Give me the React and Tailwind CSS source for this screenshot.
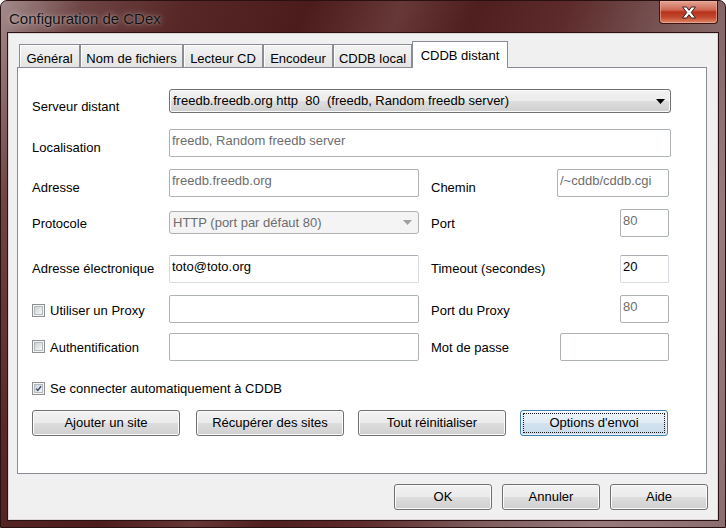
import React from 'react';

const btnBg = 'bg-[linear-gradient(to_bottom,#f2f2f2_0%,#ebebeb_48%,#dddddd_52%,#cfcfcf_100%)]';

const Button = ({ children, className = '', focused = false }) => {
    if (focused) {
        return (
            <div className={`h-[26px] rounded-[3px] border border-[#3c7fb1] p-[2px] shadow-[inset_0_0_0_1px_#ffffffa0] bg-[linear-gradient(to_bottom,#eef5fb_0%,#e2ecf5_48%,#d3e2ee_52%,#c9dbea_100%)] flex ${className}`}>
                <span className="flex-1 border border-dotted border-[#1a1a1a] flex items-center justify-center leading-4">
                    {children}
                </span>
            </div>
        );
    }
    return (
        <div className={`h-[26px] rounded-[3px] border border-[#707070] shadow-[inset_0_0_0_1px_#fbfbfb] ${btnBg} flex items-center justify-center leading-4 ${className}`}>
            {children}
        </div>
    );
};

const Field = ({ value = '', enabled = false, className = '' }) => (
    <div
        className={`h-[28px] shrink-0 rounded-[2px] border bg-white pl-[2px] pt-[3px] leading-4 whitespace-nowrap overflow-hidden ${
            enabled
                ? 'border-[#d5dae1] border-t-[#abadb3] text-black'
                : 'border-[#adb2b5] text-[#6d6d6d]'
        } ${className}`}
    >
        {value}
    </div>
);

const Checkbox = ({ checked = false, className = '' }) => (
    <span className={`w-[13px] h-[13px] shrink-0 border border-[#8e8f8f] bg-[#f4f4f4] p-[1px] flex ${className}`}>
        <span className="flex-1 border border-[#b4b9be] bg-[linear-gradient(135deg,#cdd1d6,#f7f7f7)] flex">
            {checked && (
                <svg viewBox="0 0 9 9" className="w-full h-full">
                    <path d="M1.5 4.6 L3.6 7 L7.8 1.6" fill="none" stroke="#34466e" strokeWidth="1.7" />
                </svg>
            )}
        </span>
    </span>
);

const Tab = ({ label, width, active = false }) =>
    active ? (
        <div className={`${width} h-[27px] -mb-px relative z-10 bg-white border border-[#898c95] border-b-0 pt-[6px] text-center leading-4`}>
            {label}
        </div>
    ) : (
        <div className={`${width} h-[23px] bg-[linear-gradient(to_bottom,#f3f3f3,#e3e3e3)] border border-[#898c95] border-b-0 shadow-[inset_1px_1px_0_#ffffff] pt-[6px] text-center leading-4`}>
            {label}
        </div>
    );

const App = () => {
    return (
        <div className="w-[726px] h-[528px] flex flex-col rounded-t-[7px] border border-[#2a1111] overflow-hidden text-[13px] text-black font-['Liberation_Sans',Arial,sans-serif] bg-[linear-gradient(112deg,#a48c8c_0%,#6e4444_9%,#572626_20%,#4c1b1b_33%,#673838_43%,#4f1e1e_51%,#5d2b2b_61%,#7c5a5a_73%,#977b7b_86%,#8b6d6d_100%)]">
            {/* Title bar */}
            <div className="h-[32px] shrink-0 flex items-start justify-between pl-[8px] pr-[7px]">
                <span className="pt-[9px] text-[15px] leading-[18px] text-[#111] [text-shadow:0_0_6px_rgba(255,255,255,0.55),0_0_2px_rgba(255,255,255,0.35)]">
                    Configuration de CDex
                </span>
                <div className="w-[59px] h-[23px] rounded-b-[4px] border border-t-0 border-[#3a1515] shadow-[inset_0_0_0_1px_#f0b0a0a0] bg-[linear-gradient(to_bottom,#e3a595_0%,#d06a55_40%,#b8321c_50%,#c24a30_75%,#e08a68_100%)] flex items-center justify-center">
                    <svg width="16" height="13" viewBox="0 0 16 13">
                        <path
                            d="M1.5 1 H5.5 L8 4.3 L10.5 1 H14.5 L10.2 6.5 L14.5 12 H10.5 L8 8.7 L5.5 12 H1.5 L5.8 6.5 Z"
                            fill="#ffffff"
                            stroke="#3b2222"
                            strokeWidth="1"
                            strokeLinejoin="round"
                        />
                    </svg>
                </div>
            </div>

            {/* Client area */}
            <div className="ml-[7px] mr-[7px] h-[487px] shrink-0 bg-[#f0f0f0] border border-[#ddd5d5] shadow-[0_0_0_1px_#2b1111] flex flex-col">
                {/* Tabs */}
                <div className="pt-[7px] pl-[10px] h-[33px] flex items-end">
                    <Tab label="Général" width="w-[61px]" />
                    <Tab label="Nom de fichiers" width="w-[103px]" />
                    <Tab label="Lecteur CD" width="w-[80px]" />
                    <Tab label="Encodeur" width="w-[70px]" />
                    <Tab label="CDDB local" width="w-[79px]" />
                    <Tab label="CDDB distant" width="w-[96px]" active />
                </div>

                {/* Panel */}
                <div className="ml-[8px] w-[690px] h-[407px] bg-white border border-[#898c95] pt-[21px] pl-[14px] pr-[37px] flex flex-col">
                    <div className="flex h-[24px]">
                        <span className="w-[137px] shrink-0 mt-[10px] leading-4">Serveur distant</span>
                        <div className={`w-[502px] h-[24px] shrink-0 rounded-[3px] border border-[#707070] shadow-[inset_0_0_0_1px_#fafafa] ${btnBg} flex items-center pl-[3px] pr-[5px]`}>
                            <span className="flex-1 whitespace-pre leading-4">freedb.freedb.org http  80  (freedb, Random freedb server)</span>
                            <svg width="9" height="5" viewBox="0 0 9 5">
                                <path d="M0 0 H9 L4.5 5 Z" fill="#000" />
                            </svg>
                        </div>
                    </div>

                    <div className="flex mt-[16px]">
                        <span className="w-[137px] shrink-0 mt-[11px] leading-4">Localisation</span>
                        <Field className="w-[502px]" value="freedb, Random freedb server" />
                    </div>

                    <div className="flex mt-[12px]">
                        <span className="w-[137px] shrink-0 mt-[11px] leading-4">Adresse</span>
                        <Field className="w-[250px]" value="freedb.freedb.org" />
                        <span className="flex-1 ml-[12px] mt-[11px] leading-4">Chemin</span>
                        <Field className="w-[112px]" value="/~cddb/cddb.cgi" />
                    </div>

                    <div className="flex mt-[12px]">
                        <span className="w-[137px] shrink-0 mt-[7px] leading-4">Protocole</span>
                        <div className="w-[250px] h-[23px] mt-[2px] shrink-0 rounded-[3px] border border-[#adb2b5] bg-[#f4f4f4] flex items-center pl-[3px] pr-[6px] text-[#6d6d6d]">
                            <span className="flex-1 leading-4">HTTP (port par défaut 80)</span>
                            <svg width="9" height="5" viewBox="0 0 9 5">
                                <path d="M0 0 H9 L4.5 5 Z" fill="#a0a0a0" />
                            </svg>
                        </div>
                        <span className="flex-1 ml-[12px] mt-[7px] leading-4">Port</span>
                        <Field className="w-[49px]" value="80" />
                    </div>

                    <div className="flex mt-[18px]">
                        <span className="w-[137px] shrink-0 mt-[6px] leading-4">Adresse électronique</span>
                        <Field className="w-[250px]" value="toto@toto.org" enabled />
                        <span className="flex-1 ml-[12px] mt-[6px] leading-4">Timeout (secondes)</span>
                        <Field className="w-[49px]" value="20" enabled />
                    </div>

                    <div className="flex mt-[12px]">
                        <div className="w-[137px] shrink-0 flex items-start">
                            <Checkbox className="mt-[9px]" />
                            <span className="ml-[5px] mt-[8px] leading-4">Utiliser un Proxy</span>
                        </div>
                        <Field className="w-[250px]" />
                        <span className="flex-1 ml-[12px] mt-[8px] leading-4">Port du Proxy</span>
                        <Field className="w-[49px]" value="80" />
                    </div>

                    <div className="flex mt-[10px]">
                        <div className="w-[137px] shrink-0 flex items-start">
                            <Checkbox className="mt-[7px]" />
                            <span className="ml-[5px] mt-[7px] leading-4">Authentification</span>
                        </div>
                        <Field className="w-[250px]" />
                        <span className="flex-1 ml-[12px] mt-[7px] leading-4">Mot de passe</span>
                        <Field className="w-[109px]" />
                    </div>

                    <div className="flex items-start mt-[20px] h-[16px]">
                        <Checkbox checked className="mt-[1px]" />
                        <span className="ml-[5px] leading-4">Se connecter automatiquement à CDDB</span>
                    </div>

                    <div className="flex mt-[13px]">
                        <Button className="w-[148px]">Ajouter un site</Button>
                        <Button className="w-[148px] ml-[16px]">Récupérer des sites</Button>
                        <Button className="w-[148px] ml-[14px]">Tout réinitialiser</Button>
                        <Button className="w-[148px] ml-[14px]" focused>Options d'envoi</Button>
                    </div>
                </div>

                {/* Dialog buttons */}
                <div className="mt-[10px] pr-[9px] flex justify-end gap-[10px]">
                    <Button className="w-[98px]">OK</Button>
                    <Button className="w-[98px]">Annuler</Button>
                    <Button className="w-[98px]">Aide</Button>
                </div>
            </div>
        </div>
    );
};

export default App;
